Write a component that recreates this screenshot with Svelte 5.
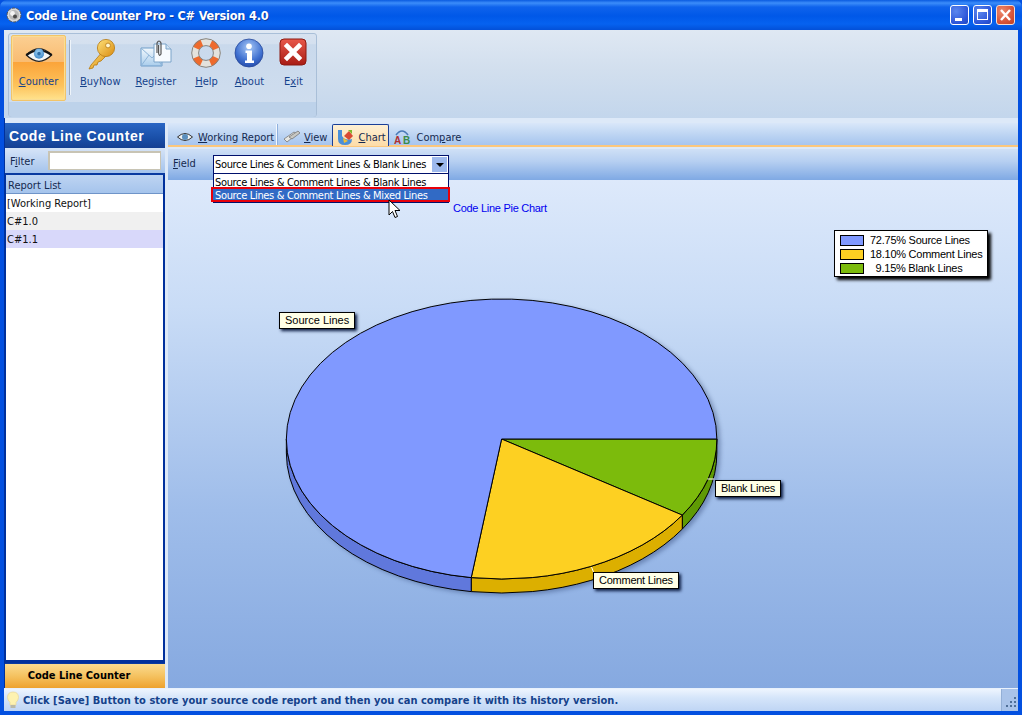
<script>
  const cx = 501, cy = 439, rx = 215.5, ry = 140, depth = 14;
  const pt = (deg, dy = 0) => {
    const a = (deg * Math.PI) / 180;
    return [(cx + rx * Math.cos(a)).toFixed(1), (cy + dy + ry * Math.sin(a)).toFixed(1)].join(' ');
  };
  const wedge = (a0, a1) =>
    `M${cx} ${cy} L${pt(a0)} A${rx} ${ry} 0 ${a1 - a0 > 180 ? 1 : 0} 1 ${pt(a1)} Z`;
  const wall = (a0, a1) =>
    `M${pt(a0)} A${rx} ${ry} 0 0 1 ${pt(a1)} L${pt(a1, depth)} A${rx} ${ry} 0 0 0 ${pt(a0, depth)} Z`;
  const slices = [
    { from: 0, to: 32.94, top: '#7cbb0c', side: '#5f9a04' },
    { from: 32.94, to: 98.1, top: '#fdd022', side: '#dcaf00' },
    { from: 98.1, to: 360, top: '#8099ff', side: '#6078dc', wallTo: 180 }
  ];
  const legend = [
    { label: '72.75% Source Lines', cls: 'blue' },
    { label: '18.10% Comment Lines', cls: 'yellow' },
    { label: '\u00a0\u00a09.15% Blank Lines', cls: 'green' }
  ];
</script>

<div class="window">
  <header class="titlebar">
    <svg class="appicon" viewBox="0 0 16 16" width="16" height="16">
      <circle cx="8" cy="8" r="7" fill="#d8d8d8" stroke="#555" stroke-width="1" stroke-dasharray="3 1.4"/>
      <circle cx="8" cy="8" r="5" fill="#b8b8b8"/>
      <circle cx="6.5" cy="6.5" r="2.4" fill="#f4f4f4"/>
      <circle cx="9" cy="9.5" r="2" fill="#4a4a4a"/>
    </svg>
    <span class="title">Code Line Counter Pro - C# Version 4.0</span>
    <div class="winbtns">
      <div class="winbtn"><span class="min"></span></div>
      <div class="winbtn"><span class="max"></span></div>
      <div class="winbtn close">
        <svg viewBox="0 0 19 20" width="19" height="20"><path d="M5 5 L14 15 M14 5 L5 15" stroke="#fff" stroke-width="2.4"/></svg>
      </div>
    </div>
  </header>

  <section class="toolbar">
    <div class="group">
      <div class="tools">
        <div class="tool active">
          <svg viewBox="0 0 30 20" width="30" height="18">
            <defs><radialGradient id="iris" cx=".45" cy=".35" r=".7"><stop offset="0" stop-color="#9fd2f5"/><stop offset="1" stop-color="#3b86c8"/></radialGradient></defs>
            <path d="M1 10 Q15 -4 29 10 Q15 24 1 10 Z" fill="#f4f6f6" stroke="#222" stroke-width="1.4"/>
            <path d="M1 10 Q15 0 29 10" fill="none" stroke="#111" stroke-width="2.4"/>
            <circle cx="15" cy="8.5" r="5.6" fill="url(#iris)"/>
            <circle cx="15" cy="8.5" r="2" fill="#2d6ea8"/>
          </svg>
          <span><u>C</u>ounter</span>
        </div>
        <div class="sep"></div>
        <div class="tool">
          <svg viewBox="0 0 30 32" width="30" height="32">
            <defs><linearGradient id="gold" x1="0" y1="0" x2="1" y2="1"><stop offset="0" stop-color="#ffe27a"/><stop offset="1" stop-color="#d98b10"/></linearGradient></defs>
            <path d="M18 13 L6 27 L4 31 L8 30 L9 27 L12 27 L13 24 L16 23 L22 17 Z" fill="url(#gold)" stroke="#b87a10" stroke-width=".8"/>
            <circle cx="21" cy="10" r="8.6" fill="url(#gold)" stroke="#b87a10" stroke-width=".8"/>
            <circle cx="23" cy="7.5" r="2.4" fill="#fff6cf" stroke="#b87a10" stroke-width=".8"/>
          </svg>
          <span><u>B</u>uyNow</span>
        </div>
        <div class="tool reg">
          <svg viewBox="0 0 32 32" width="32" height="32">
            <defs><linearGradient id="env" x1="0" y1="0" x2="0" y2="1"><stop offset="0" stop-color="#f2f8fd"/><stop offset="1" stop-color="#a9cdec"/></linearGradient></defs>
            <path d="M1 10 H22 V28 H1 Z" fill="url(#env)" stroke="#6f9dc9"/>
            <path d="M1 10 L12 20 L22 10 M1 28 L9 17 M22 28 L15 17" fill="none" stroke="#8db4d8"/>
            <path d="M14 6 H26 L31 11 V24 H14 Z" fill="#f7fbff" stroke="#7ba3c9"/>
            <path d="M26 6 V11 H31" fill="#cfe2f3" stroke="#7ba3c9"/>
            <path d="M17 15 V5 Q19 1 21 5 V16 Q19 19 18.6 15 V7" fill="none" stroke="#555" stroke-width="1.2"/>
          </svg>
          <span><u>R</u>egister</span>
        </div>
        <div class="tool narrow help">
          <svg viewBox="0 0 30 30" width="30" height="30">
            <circle cx="15" cy="15" r="11" fill="none" stroke="#e4e2dc" stroke-width="7"/>
            <circle cx="15" cy="15" r="11" fill="none" stroke="#ee6a2c" stroke-width="7" stroke-dasharray="8 9.28" stroke-dashoffset="-4.64"/>
            <circle cx="15" cy="15" r="14.3" fill="none" stroke="#85837e" stroke-width="1"/>
            <circle cx="15" cy="15" r="7.4" fill="none" stroke="#85837e" stroke-width="1"/>
          </svg>
          <span><u>H</u>elp</span>
        </div>
        <div class="tool narrow">
          <svg viewBox="0 0 30 30" width="30" height="30">
            <defs><radialGradient id="infob" cx=".5" cy=".3" r=".8"><stop offset="0" stop-color="#a8c8f6"/><stop offset=".6" stop-color="#3f70d0"/><stop offset="1" stop-color="#1d3f9c"/></radialGradient></defs>
            <circle cx="15" cy="15" r="14" fill="url(#infob)" stroke="#2a4a9a" stroke-width=".8"/>
            <circle cx="15" cy="8.3" r="2.8" fill="#fff"/>
            <path d="M11.5 12.5 H18 V22.5 H20 V25 H11 V22.5 H13 V15 H11.5 Z" fill="#fff"/>
          </svg>
          <span><u>A</u>bout</span>
        </div>
        <div class="tool narrow">
          <svg viewBox="0 0 28 28" width="28" height="28">
            <defs><linearGradient id="redb" x1="0" y1="0" x2="0" y2="1"><stop offset="0" stop-color="#e8584a"/><stop offset="1" stop-color="#a81c14"/></linearGradient></defs>
            <rect x="1" y="1" width="26" height="26" rx="4" fill="url(#redb)" stroke="#8c1810"/>
            <path d="M8 8 L20 20 M20 8 L8 20" stroke="#fff" stroke-width="4.6" stroke-linecap="square"/>
          </svg>
          <span>E<u>x</u>it</span>
        </div>
      </div>
      <div class="caption"></div>
    </div>
  </section>

  <main class="main">
    <aside class="left">
      <div class="lefthead">Code Line Counter</div>
      <div class="filter">
        <label for="flt">F<u>i</u>lter</label>
        <input id="flt" />
      </div>
      <div class="listwrap">
        <div class="listhead">Report List</div>
        <div class="row">[Working Report]</div>
        <div class="row alt">C#1.0</div>
        <div class="row sel">C#1.1</div>
      </div>
      <div class="leftbtn">Code Line Counter</div>
    </aside>

    <section class="right">
      <nav class="tabs">
        <div class="tab">
          <svg viewBox="0 0 16 10" width="16" height="10"><path d="M.5 5 Q8 -2 15.5 5 Q8 12 .5 5 Z" fill="#eef2f4" stroke="#333"/><circle cx="8" cy="5" r="3" fill="#5b8fbe"/></svg>
          <span><u>W</u>orking Report</span>
        </div>
        <div class="tabsep"></div>
        <div class="tab">
          <svg viewBox="0 0 18 14" width="18" height="14"><path d="M1 9 L11 2 L14 4 L4 12 Z" fill="#e6e6e2" stroke="#777" stroke-width=".8"/><path d="M6 7 L15 1 L17 3 L9 9 Z" fill="#c9c9c4" stroke="#777" stroke-width=".8"/></svg>
          <span class="t-view"><u>V</u>iew</span>
        </div>
        <div class="tab on">
          <svg viewBox="0 0 16 18" width="16" height="18">
            <path d="M1 2 V11 Q1 17 8 17 Q15 17 15 11 Q8 13 5 8 V2 Z" fill="#4a8fd8"/>
            <path d="M7 8 L12 3 L16 8 L12 12 Z" fill="#d84a34"/>
            <path d="M6 10 L11 13 L7 15 Z" fill="#f0c030"/>
            <path d="M11 2 L15 2 L15 6 Z" fill="#7cb82c"/>
          </svg>
          <span><u>C</u>hart</span>
        </div>
        <div class="tab">
          <svg class="cmp" viewBox="0 0 18 16" width="18" height="16">
            <path d="M3 6 Q9 -2 15 6" fill="none" stroke="#4a7ab8" stroke-width="1.6"/>
            <text x="1" y="15" class="ca">A</text><text x="10" y="15" class="cb">B</text>
          </svg>
          <span>Com<u>p</u>are</span>
        </div>
      </nav>

      <div class="fieldbar">
        <span class="fieldlabel"><u>F</u>ield</span>
        <div class="combo">
          <span>Source Lines &amp; Comment Lines &amp; Blank Lines</span>
          <div class="drop"><i></i></div>
        </div>
        <div class="dropdown">
          <div class="opt">Source Lines &amp; Comment Lines &amp; Blank Lines</div>
          <div class="opt hi">Source Lines &amp; Comment Lines &amp; Mixed Lines</div>
        </div>
        <svg class="cursor" viewBox="0 0 13 20" width="13" height="20">
          <path d="M1 1 V16 L4.5 12.5 L7 18.5 L9.5 17.5 L7 11.5 H12 Z" fill="#fff" stroke="#000" stroke-width="1"/>
        </svg>
      </div>

      <div class="chart">
        <svg class="pie" viewBox="167 180 851 508" preserveAspectRatio="none">
          <g class="pieshape">
            {#each slices as s}
              <path d={wall(s.from, s.wallTo ?? s.to)} fill={s.side} stroke="#000" stroke-width="1"/>
            {/each}
            {#each slices as s}
              <path d={wedge(s.from, s.to)} fill={s.top} stroke="#000" stroke-width="1"/>
            {/each}
          </g>
          <path d="M707 479 H714 M591 567 L593 572 M345 313 L353 320" stroke="#fff" stroke-width="1" fill="none"/>
        </svg>
        <div class="charttitle">Code Line Pie Chart</div>
        <div class="legend">
          {#each legend as l}
            <div class="lrow"><i class={l.cls}></i><span>{l.label}</span></div>
          {/each}
        </div>
        <div class="tag t1">Source Lines</div>
        <div class="tag t2">Blank Lines</div>
        <div class="tag t3">Comment Lines</div>
      </div>
    </section>
  </main>

  <footer class="status">
    <svg viewBox="0 0 12 18" width="12" height="18">
      <path d="M6 1 Q11.5 1 11.5 6.5 Q11.5 9 9 11.5 V14 H3 V11.5 Q.5 9 .5 6.5 Q.5 1 6 1 Z" fill="#fdf2b0" stroke="#e8d9a0" stroke-width=".8"/>
      <rect x="3.5" y="14" width="5" height="3" fill="#b9b9a8"/>
    </svg>
    <span class="stext">Click [Save] Button to store your source code report and then you can compare it with its history version.</span>
    <div class="grip">
      <svg viewBox="0 0 12 12" width="12" height="12" fill="#4f6f98">
        <rect x="9" y="0" width="2" height="2"/><rect x="5" y="4" width="2" height="2"/><rect x="9" y="4" width="2" height="2"/>
        <rect x="1" y="8" width="2" height="2"/><rect x="5" y="8" width="2" height="2"/><rect x="9" y="8" width="2" height="2"/>
      </svg>
    </div>
  </footer>
</div>

<style>
  :global(body) { margin: 0; overflow: hidden; }
  :global(*) { box-sizing: border-box; }
  .window {
    width: 1022px; height: 715px; display: flex; flex-direction: column;
    background: #0350e0; font-family: "DejaVu Sans Condensed", "DejaVu Sans", sans-serif; font-stretch: condensed; font-size: 11px; color: #000;
    padding-bottom: 4px; overflow: hidden;
  }
  u { text-underline-offset: 1px; }

  .titlebar {
    height: 30px; flex: none; display: flex; align-items: center; padding: 0 7px 0 6px;
    background: linear-gradient(#0a5be0 0, #3c8dfa 3px, #0f63ec 7px, #0058e8 16px, #0662f0 24px, #0350d8 30px);
    border-radius: 7px 7px 0 0;
  }
  .appicon { flex: none; }
  .title {
    margin-left: 4px; color: #fff; font: bold 12.6px "DejaVu Sans Condensed", "DejaVu Sans", sans-serif; font-stretch: condensed;
    letter-spacing: -.18px; text-shadow: 1px 1px 0 #0a3aa0;
  }
  .winbtns { margin-left: auto; display: flex; gap: 4px; }
  .winbtn {
    width: 19px; height: 20px; border: 1px solid #fff; border-radius: 3px; position: relative;
    background: radial-gradient(circle at 30% 30%, #5b87ee, #2c55d8 70%, #2048c0);
  }
  .winbtn.close { background: radial-gradient(circle at 30% 30%, #ec8a6e, #d8553a 60%, #c04020); border-color: #f6dcd2; }
  .winbtn.close svg { position: absolute; left: -1px; top: -1px; }
  .min { position: absolute; left: 4px; bottom: 3px; width: 7px; height: 3px; background: #fff; }
  .max { position: absolute; left: 3px; top: 3px; width: 11px; height: 11px; border: 1px solid #fff; border-top-width: 3px; }

  .toolbar {
    height: 88px; flex: none; margin: 0 4px; padding: 3px 0 1px 4px;
    background: linear-gradient(#dfe8f3, #d2dfee 45%, #c3d6ec);
  }
  .group {
    width: 309px; height: 84px; border: 1px solid #a9bfd8; border-radius: 3px;
    display: flex; flex-direction: column;
    background: linear-gradient(#d7e2f0, #d4e0ef 12%, #c9d9ec 13%, #d0deef);
  }
  .tools { flex: 1; display: flex; align-items: stretch; padding: 1px 0 0 2px; }
  .caption { height: 15px; flex: none; background: #bdd2ea; border-radius: 0 0 3px 3px; }
  .tool {
    flex: none; display: flex; flex-direction: column; align-items: center; justify-content: flex-end;
    padding: 0 7px 13px 8px; color: #15428b; gap: 5px;
  }
  .tool svg { margin-bottom: auto; margin-top: 3px; }
  .tool span { line-height: 14px; white-space: nowrap; }
  .tool.reg { padding-right: 9px; }
  .tool.narrow { padding-left: 10px; padding-right: 10px; position: relative; }
  .tool.narrow svg { margin-left: -8px; margin-right: -8px; }
  .tool.help { margin-right: -3px; }
  .tool.active {
    width: 55px; height: 66px; padding: 0 0 11px; border: 1px solid #f2c468; border-radius: 2px;
    background: linear-gradient(#fbcf92, #f9bc72 40%, #fba43a 41%, #fdc35c 78%, #ffe38e);
    box-shadow: inset 0 0 0 1px #f9dd94; margin-right: 3px;
  }
  .tool.active svg { margin-top: 10px; }
  .sep { width: 2px; height: 55px; margin: 5px 1px 0 0; background: #97a9bf; border-right: 1px solid #eef4fa; flex: none; }

  .main {
    flex: 1; min-height: 0; display: flex; margin: 0 4px; padding-top: 5px;
    background: #dde9f8; border-left: 1px solid #00309c;
  }
  .left {
    width: 160px; flex: none; display: flex; flex-direction: column; background: #0a3aa0;
  }
  .lefthead {
    height: 25px; flex: none; padding: 3px 0 0 4px; color: #fff;
    font: bold 14px/20px "Liberation Sans", sans-serif; letter-spacing: .6px;
    background: linear-gradient(#2a66c4, #1a4fa8 60%, #153f92);
  }
  .filter {
    height: 25px; flex: none; display: flex; align-items: center; padding: 0 3px 0 5px;
    background: linear-gradient(#d6e4f7, #a4c3ec);
  }
  .filter label { width: 38px; color: #15294f; margin-top: 1px; }
  .filter input {
    width: 113px; height: 19px; padding: 0; background: #fff; border: 1px solid #c8c4b4; border-width: 2px 1px 1px 2px; outline: 0;
  }
  .listwrap {
    flex: 1; margin-top: 2px; background: #fff; border: solid #00309c; border-width: 0 2px 3px 1px;
    min-height: 0;
  }
  .listhead {
    height: 19px; padding-left: 2px; line-height: 21px; color: #15294f;
    background: linear-gradient(#bed4f2, #a5c4ec); border-bottom: 1px solid #6f94c8;
  }
  .row { height: 18px; padding-left: 1px; line-height: 20px; color: #111; white-space: nowrap; }
  .row.alt { background: #f0f0f0; }
  .row.sel { background: #d8d8fa; }
  .leftbtn {
    height: 24px; flex: none; margin-top: 1px; text-align: center; font: bold 11px/24px "DejaVu Sans Condensed", "DejaVu Sans", sans-serif; font-stretch: condensed;
    color: #000; padding-right: 12px;
    background: linear-gradient(#fbdb8f, #f5c260 50%, #eea22e);
  }

  .right { flex: 1; min-width: 0; display: flex; flex-direction: column; margin-left: 3px; }
  .tabs {
    height: 24px; flex: none; display: flex; align-items: flex-end; padding-left: 9px;
    background: linear-gradient(#d9e7f9, #b9d2f2 60%, #a7c5ee);
    border-bottom: 2px solid #fcc77c;
  }
  .tab { display: flex; align-items: center; height: 21px; padding-top: 5px; gap: 5px; color: #15294f; white-space: nowrap; position: relative; }
  .tab:nth-child(1) { width: 99px; }
  .tabsep { width: 2px; height: 21px; background: #f4f8fd; margin-right: 5px; border-right: 1px solid #8fb0de; }
  .t-view { margin-right: 5px; margin-left: -2px; }
  .tab.on {
    width: 57px; padding-left: 4px; padding-top: 3px; background: linear-gradient(#fef0d4, #fddca8);
    border: 1px solid #1a3f98; border-bottom: 0; margin-right: 4px; margin-bottom: -1px; height: 22px; border-radius: 2px 2px 0 0;
  }
  .ca { font: bold 10px "Liberation Sans", sans-serif; fill: #b03030; }
  .cb { font: bold 10px "Liberation Sans", sans-serif; fill: #3a8a4a; }
  .fieldbar {
    height: 33px; flex: none; position: relative; display: flex; align-items: center; padding-left: 5px; margin-top: 0;
    background: linear-gradient(#cfe0f6, #b6cff1 40%, #7fa9e4);
    border-top: 2px solid #dde9f8; z-index: 2;
  }
  .fieldlabel { width: 40px; color: #15294f; margin-top: -3px; }
  .combo {
    width: 236px; height: 19px; display: flex; align-items: center; justify-content: space-between;
    padding: 0 1px 0 1px; background: #fff; border: 1px solid #00106c; white-space: nowrap; letter-spacing: -.33px;
  }
  .drop { width: 15px; height: 15px; background: #9db9ed; display: flex; align-items: center; justify-content: center; }
  .drop i { width: 0; height: 0; border: solid transparent; border-width: 4px 4px 0; border-top-color: #000; }
  .dropdown {
    position: absolute; left: 45px; top: 25px; width: 236px; background: #fff; border: 1px solid #00106c; border-top: 0; letter-spacing: -.33px;
  }
  .opt { height: 13px; line-height: 17px; padding-left: 1px; white-space: nowrap; }
  .opt.hi {
    margin: 0 -2px 0 -3px; height: 15px; line-height: 14px; padding-left: 2px; color: #fff; background: #316ac5;
    border: 2px solid #e8000a; width: 239px;
  }
  .cursor { position: absolute; left: 220px; top: 50px; z-index: 3; }

  .chart {
    flex: 1; min-height: 0; position: relative;
    background: linear-gradient(#dde9fb, #c9dcf6 25%, #9fbdea 65%, #86a9e0);
  }
  .pie { position: absolute; inset: 0; width: 100%; height: 100%; }
  .pieshape { filter: drop-shadow(3px 2px 2px rgba(20, 40, 90, .35)); }
  .charttitle { position: absolute; left: 285px; top: 21px; color: #0000f0; font: 11px/14px "Liberation Sans", sans-serif; letter-spacing: -.28px; }
  .legend {
    position: absolute; left: 666px; top: 50px; width: 154px; height: 47px; padding: 2px 0 0 5px;
    background: #fff; border: 1px solid #000; box-shadow: 3px 3px 3px #000;
    font: 11px/14px "Liberation Sans", sans-serif; letter-spacing: -.25px;
  }
  .lrow { display: flex; align-items: center; height: 14px; gap: 6px; white-space: nowrap; }
  .lrow i { width: 24px; height: 11px; border: 1px solid #000; flex: none; }
  .blue { background: #8099ff; }
  .yellow { background: #fdd022; }
  .green { background: #7cbb0c; }
  .tag {
    position: absolute; height: 17px; padding: 0 5px; background: #ffffe6; border: 1px solid #000;
    box-shadow: 2px 2px 3px #0a1a40; font: 11px/15px "Liberation Sans", sans-serif; letter-spacing: -.25px; white-space: nowrap;
  }
  .t1 { left: 111px; top: 132px; letter-spacing: 0; }
  .t2 { left: 547px; top: 300px; }
  .t3 { left: 425px; top: 392px; }

  .status {
    height: 23px; flex: none; margin: 0 4px; display: flex; align-items: center; padding-left: 3px; gap: 4px;
    background: linear-gradient(#eef5fe, #d5e5fa 40%, #bfd5f4);
    border-top: 1px solid #e9f1fc; color: #15428b;
  }
  .stext { font: bold 11px "DejaVu Sans Condensed", "DejaVu Sans", sans-serif; font-stretch: condensed; letter-spacing: .03px; white-space: nowrap; }
  .grip {
    margin-left: auto; width: 17px; height: 100%; display: flex; align-items: flex-end; justify-content: flex-end;
    padding: 0 1px 2px 0; border-left: 1px solid #93afd6; background: #a9c3e9;
  }
</style>
